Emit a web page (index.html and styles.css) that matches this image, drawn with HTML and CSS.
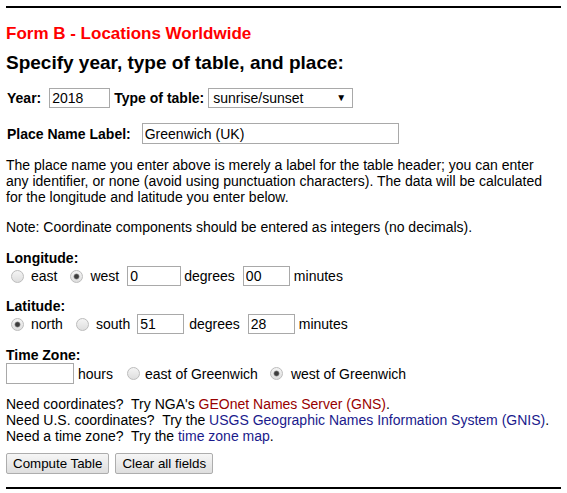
FILE: index.html
```html
<!DOCTYPE html>
<html>
<head>
<meta charset="utf-8">
<link rel="stylesheet" href="styles.css">
</head>
<body>
<hr class="rule">
<h3 class="form-title">Form B - Locations Worldwide</h3>
<h2 class="form-sub">Specify year, type of table, and place:</h2>
<form class="form">
  <div class="row row-year">
    <b class="lbl">Year:</b>
    <input class="txt w-year" type="text" value="2018">
    <b class="lbl lbl-type">Type of table:</b>
    <span class="sel-wrap">
      <select class="sel"><option>sunrise/sunset</option></select>
      <span class="sel-arrow">▼</span>
    </span>
  </div>
  <div class="row row-place">
    <b class="lbl">Place Name Label:</b>
    <input class="txt w-place" type="text" value="Greenwich (UK)">
  </div>
  <p class="para">The place name you enter above is merely a label for the table header; you can enter any identifier, or none (avoid using punctuation characters). The data will be calculated for the longitude and latitude you enter below.</p>
  <p class="para note">Note: Coordinate components should be entered as integers (no decimals).</p>

  <div class="group g-lon">
    <b class="glabel">Longitude:</b>
    <div class="row">
      <input class="rad" type="radio" name="lon"><span class="rt">east</span>
      <input class="rad rad2" type="radio" name="lon" checked><span class="rt">west</span>
      <input class="txt w-deg1" type="text" value="0"><span class="rt">degrees</span>
      <input class="txt w-min" type="text" value="00"><span class="rt">minutes</span>
    </div>
  </div>

  <div class="group g-lat">
    <b class="glabel">Latitude:</b>
    <div class="row">
      <input class="rad" type="radio" name="lat" checked><span class="rt">north</span>
      <input class="rad rad2" type="radio" name="lat"><span class="rt">south</span>
      <input class="txt w-deg" type="text" value="51"><span class="rt">degrees</span>
      <input class="txt w-min" type="text" value="28"><span class="rt">minutes</span>
    </div>
  </div>

  <div class="group g-tz">
    <b class="glabel">Time Zone:</b>
    <div class="row">
      <input class="txt w-tz" type="text" value=""><span class="rt">hours</span>
      <input class="rad rad3" type="radio" name="tz"><span class="rt">east of Greenwich</span>
      <input class="rad rad3 rad4" type="radio" name="tz" checked><span class="rt">west of Greenwich</span>
    </div>
  </div>

  <div class="links">
    <div>Need coordinates?&nbsp; Try NGA's <a class="lnk-red" href="#">GEOnet Names Server (GNS)</a>.</div>
    <div>Need U.S. coordinates?&nbsp; Try the <a class="lnk-blue" href="#">USGS Geographic Names Information System (GNIS)</a>.</div>
    <div>Need a time zone?&nbsp; Try the <a class="lnk-blue" href="#">time zone map</a>.</div>
  </div>

  <div class="buttons">
    <button class="btn" type="button">Compute Table</button>
    <button class="btn" type="button">Clear all fields</button>
  </div>
</form>
<hr class="rule rule-bottom">
</body>
</html>
```

FILE: styles.css
```css
html, body {
  margin: 0;
  background: #fff;
}
body {
  padding: 6px;
  font-family: "Liberation Sans", Arial, sans-serif;
  font-size: 14px;
  line-height: 16px;
  color: #000;
}
.rule {
  margin: 0;
  border: 0;
  height: 2px;
  background: #000;
}
.form-title {
  margin: 17px 0 0;
  font-size: 17px;
  line-height: 18px;
  color: #ff0000;
  font-weight: bold;
}
.form-sub {
  margin: 8px 0 0;
  font-size: 19px;
  line-height: 23px;
  font-weight: bold;
}
.form {
  margin: 0;
}
.row {
  display: flex;
  align-items: center;
}
.row-year {
  margin-top: 14px;
}
.row-place {
  margin-top: 15px;
}
.lbl {
  font-weight: bold;
  margin-left: 1px;
}
.lbl-type {
  margin-left: 4px;
}
.txt {
  box-sizing: border-box;
  height: 20px;
  border: 1px solid #a9a9a9;
  padding: 0 2px;
  margin: 0;
  font-family: "Liberation Sans", Arial, sans-serif;
  font-size: 14px;
  color: #000;
  background: #fff;
  outline: none;
}
.w-year { width: 61px; margin-left: 8px; }
.w-place { width: 257px; height: 21px; margin-left: 11px; }
.sel-wrap {
  position: relative;
  display: inline-block;
  margin-left: 4px;
}
.sel {
  box-sizing: border-box;
  appearance: none;
  -webkit-appearance: none;
  width: 145px;
  height: 20px;
  border: 1px solid #a9a9a9;
  border-radius: 0;
  background: #fff;
  padding: 0 0 0 4px;
  margin: 0;
  font-family: "Liberation Sans", Arial, sans-serif;
  font-size: 14px;
  color: #000;
  display: block;
}
.sel-arrow {
  position: absolute;
  right: 7px;
  top: 3px;
  font-size: 10px;
  line-height: 14px;
  pointer-events: none;
}
.para {
  margin: 13px 0 0;
  max-width: 545px;
}
.note {
  margin-top: 14px;
}
.group {
  margin-top: 12px;
}
.g-lon {
  margin-top: 15px;
}
.g-tz {
  margin-top: 13px;
}
.glabel {
  display: block;
  font-weight: bold;
  line-height: 16px;
}
.rad {
  appearance: none;
  -webkit-appearance: none;
  box-sizing: border-box;
  width: 13px;
  height: 13px;
  margin: 0 7px 0 5px;
  border: 1px solid #bcbcbc;
  border-radius: 50%;
  background: linear-gradient(#f4f4f4, #dedede);
}
.rad:checked {
  background:
    radial-gradient(circle, #3c3c3c 0, #3c3c3c 1.8px, #8a8a8a 2.6px, transparent 3.3px),
    linear-gradient(#f4f4f4, #dedede);
}
.rad2 { margin-left: 13px; }
.rad3 { margin-left: 14px; margin-right: 5px; }
.rad4 { margin-left: 12px; margin-right: 8px; }
.rt {
  white-space: nowrap;
}
.w-deg1 { width: 54px; margin-left: 8px; margin-right: 3px; }
.w-deg { width: 47px; margin-left: 7px; margin-right: 5px; }
.w-min { width: 47px; margin-left: 8px; margin-right: 4px; }
.w-tz { width: 68px; height: 21px; margin-right: 4px; }
.links {
  margin-top: 12px;
  line-height: 16px;
}
.links a { text-decoration: none; }
.lnk-red { color: #990000; }
.lnk-blue { color: #1a1a8c; }
.buttons {
  display: flex;
  gap: 6px;
  margin-top: 9px;
}
.btn {
  box-sizing: border-box;
  height: 21px;
  padding: 0 6px;
  border: 1px solid #adadad;
  border-radius: 2px;
  background: linear-gradient(#f6f6f6, #dedede);
  font-family: "Liberation Sans", Arial, sans-serif;
  font-size: 13.333px;
  color: #000;
  line-height: 19px;
}
.rule-bottom {
  margin-top: 13px;
}
```
